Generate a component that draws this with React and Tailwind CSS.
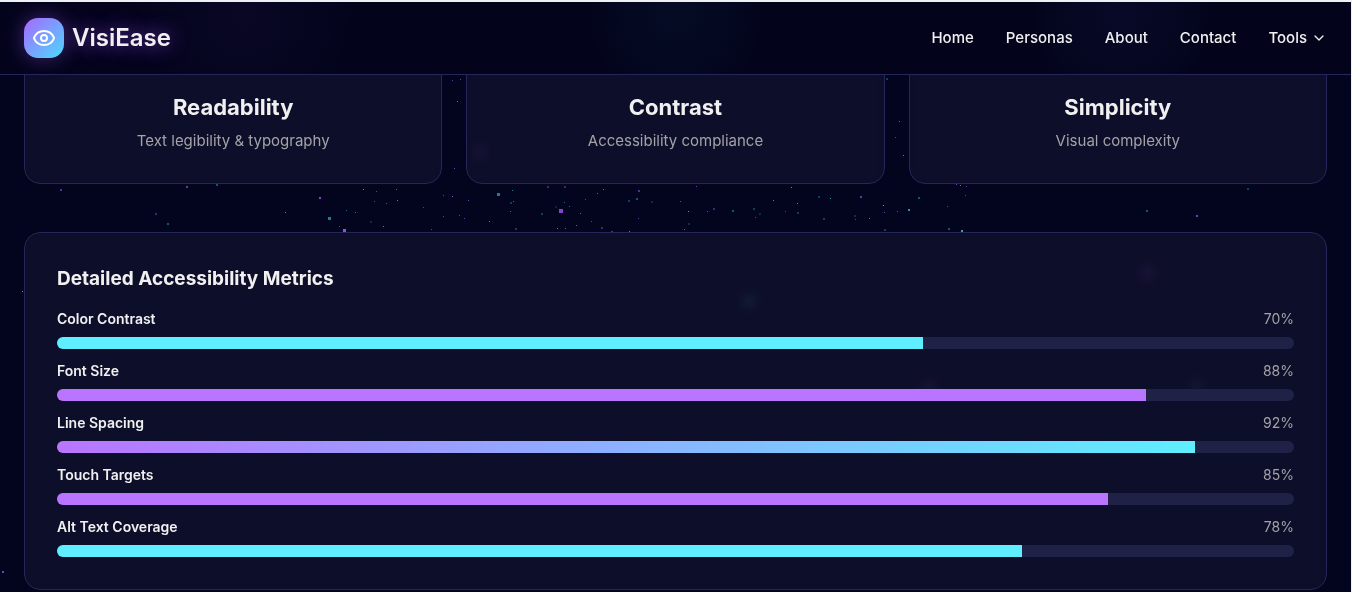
import React from 'react';
import { Eye, ChevronDown } from 'lucide-react';

const navLinks = ['Home', 'Personas', 'About', 'Contact'];

const scores = [
  { title: 'Readability', text: 'Text legibility & typography' },
  { title: 'Contrast', text: 'Accessibility compliance' },
  { title: 'Simplicity', text: 'Visual complexity' },
];

const metrics = [
  { label: 'Color Contrast', value: 70, fill: 'bg-[#5eeeff]' },
  { label: 'Font Size', value: 88, fill: 'bg-[#b975ff]' },
  { label: 'Line Spacing', value: 92, fill: 'bg-linear-to-r/srgb from-[#b975ff] to-[#5eeeff]' },
  { label: 'Touch Targets', value: 85, fill: 'bg-[#b975ff]' },
  { label: 'Alt Text Coverage', value: 78, fill: 'bg-[#5eeeff]' },
];

// x, y, size, opacity
const purpleStars = [
  [60, 189, 2, 0.5], [186, 186, 2, 0.6], [155, 213, 2, 0.4], [319, 197, 2, 0.8], [343, 229, 3, 0.9],
  [423, 207, 1, 0.6], [452, 196, 1, 0.9], [468, 200, 1, 0.7], [464, 218, 1, 0.6], [547, 186, 2, 0.4],
  [564, 186, 2, 0.4], [585, 199, 1, 0.6], [559, 209, 4, 0.8], [555, 206, 2, 0.2], [569, 206, 1, 0.7],
  [576, 225, 1, 0.8], [601, 227, 2, 0.4], [638, 190, 2, 0.5], [680, 201, 1, 0.7], [638, 218, 1, 0.6],
  [696, 186, 1, 0.7], [707, 211, 1, 0.7], [713, 208, 2, 0.4], [684, 229, 1, 0.8], [755, 217, 1, 0.6],
  [785, 211, 1, 0.6], [791, 187, 1, 1], [860, 196, 2, 0.6], [855, 219, 1, 0.6], [884, 212, 1, 0.7],
  [897, 211, 1, 0.7], [947, 206, 1, 0.6], [956, 184, 1, 0.7], [960, 185, 1, 0.9], [966, 186, 1, 0.6],
  [965, 195, 1, 0.6], [1196, 215, 2, 0.7], [452, 80, 1, 0.6], [457, 101, 1, 0.9], [454, 168, 1, 0.7],
  [2, 571, 2, 0.7], [477, 149, 6, 0.8], [1144, 269, 7, 0.8], [925, 385, 7, 0.8],
];
const cyanStars = [
  [216, 184, 2, 0.4], [167, 223, 2, 0.4], [285, 212, 1, 0.7], [328, 217, 3, 0.6], [363, 189, 1, 0.8],
  [376, 191, 1, 0.5], [396, 189, 1, 0.6], [374, 201, 1, 0.5], [386, 203, 1, 0.5], [397, 200, 1, 0.7],
  [346, 210, 1, 0.5], [355, 212, 1, 0.6], [370, 221, 2, 0.2], [339, 226, 1, 0.5], [383, 226, 1, 0.7],
  [443, 195, 1, 0.5], [443, 216, 1, 0.5], [459, 215, 1, 0.5], [431, 229, 1, 0.5], [489, 221, 1, 0.7],
  [497, 193, 3, 0.6], [512, 190, 1, 0.6], [510, 202, 2, 0.3], [513, 201, 1, 0.6], [510, 211, 1, 0.6],
  [541, 213, 2, 0.3], [564, 202, 1, 0.5], [580, 213, 1, 0.6], [591, 221, 1, 0.5], [597, 193, 1, 0.6],
  [603, 189, 1, 0.7], [515, 228, 2, 0.3], [557, 228, 1, 0.7], [565, 228, 1, 0.6], [611, 231, 2, 0.4],
  [628, 200, 2, 0.3], [636, 198, 2, 0.4], [651, 201, 2, 0.2], [629, 231, 1, 0.7], [688, 211, 1, 0.8],
  [688, 223, 2, 0.2], [732, 210, 2, 0.4], [753, 208, 2, 0.3], [759, 213, 2, 0.2], [773, 200, 1, 0.7],
  [797, 203, 1, 0.7], [797, 212, 2, 0.3], [818, 196, 2, 0.3], [823, 218, 2, 0.3], [830, 198, 1, 0.7],
  [854, 215, 2, 0.2], [869, 218, 1, 0.7], [883, 205, 1, 0.9], [884, 229, 2, 0.3], [908, 209, 2, 0.7],
  [918, 197, 2, 0.4], [948, 228, 2, 0.4], [961, 230, 2, 0.8], [903, 155, 1, 0.7], [895, 137, 1, 0.5],
  [886, 78, 2, 0.3], [460, 79, 1, 0.5], [899, 121, 1, 0.6], [1146, 210, 2, 0.4], [1247, 188, 2, 0.3],
  [22, 291, 1, 0.8], [746, 298, 7, 0.8], [1194, 383, 6, 0.7],
];

const Stars = () => (
  <svg className="absolute inset-x-0 -top-0.5 h-full w-full" aria-hidden="true">
    <g fill="#a855f7">
      {purpleStars.map(([x, y, s, o]) => (
        <rect key={`${x}-${y}`} x={x} y={y} width={s} height={s} opacity={o} />
      ))}
    </g>
    <g fill="#2dd4d4">
      {cyanStars.map(([x, y, s, o]) => (
        <rect key={`${x}-${y}`} x={x} y={y} width={s} height={s} opacity={o} />
      ))}
    </g>
  </svg>
);

const App = () => {
  return (
    <div className="relative min-h-screen overflow-hidden border-t-2 border-r border-[#eef0f4] bg-[#03041e] font-['Inter',sans-serif] text-[#f0f0f0]">
      <Stars />

      {/* Navigation */}
      <header className="absolute inset-x-0 top-0 z-10 border-b border-[#26265a] bg-[#03041c] bg-[radial-gradient(circle_at_18%_20%,rgba(168,85,247,0.04),transparent_110px),radial-gradient(circle_at_50%_20%,rgba(34,211,238,0.04),transparent_90px),radial-gradient(circle_at_83%_20%,rgba(110,110,247,0.05),transparent_90px)]">
        <div className="flex h-18 items-center justify-between px-6">
          <a href="#" className="flex items-center gap-2">
            <span className="flex size-10 items-center justify-center rounded-[14px] bg-linear-to-br/srgb from-[#a866ff] to-[#4bdcff] shadow-[0_0_20px_rgba(168,85,247,0.4)]">
              <Eye className="size-6 text-white" />
            </span>
            <span className="text-2xl font-semibold [text-shadow:0_0_20px_rgba(168,85,247,0.8)]">VisiEase</span>
          </a>
          <nav className="flex items-center gap-8 text-[15px] font-medium">
            {navLinks.map((link) => (
              <a key={link} href="#">{link}</a>
            ))}
            <button className="flex items-center gap-1">
              Tools
              <ChevronDown className="size-4" />
            </button>
          </nav>
        </div>
      </header>

      <main className="relative px-6 pt-10">
        {/* Scores */}
        <section className="grid grid-cols-3 gap-6">
          {scores.map((score) => (
            <div key={score.title} className="rounded-2xl border border-[#26265a] bg-[#12122f]/70 px-8 pt-12 pb-8 text-center backdrop-blur-[6px]">
              <h3 className="mb-2 text-[22px] leading-8 font-bold">{score.title}</h3>
              <p className="text-[15px] leading-5 text-[#a3a3a8]">{score.text}</p>
            </div>
          ))}
        </section>

        {/* Metrics */}
        <section className="mt-12 rounded-2xl border border-[#26265a] bg-[#12122f]/70 p-8 backdrop-blur-[6px]">
          <h3 className="mb-4 text-[19px] leading-7 font-bold">Detailed Accessibility Metrics</h3>
          <div className="flex flex-col gap-3">
            {metrics.map((metric) => (
              <div key={metric.label}>
                <div className="mb-2 flex justify-between text-sm leading-5">
                  <span className="font-semibold">{metric.label}</span>
                  <span className="text-[#a3a3a8]">{metric.value}%</span>
                </div>
                <div className="h-3 overflow-hidden rounded-full bg-[#202146]">
                  <div className={`h-full ${metric.fill}`} style={{ width: `${metric.value}%` }} />
                </div>
              </div>
            ))}
          </div>
        </section>
      </main>
    </div>
  );
};

export default App;
